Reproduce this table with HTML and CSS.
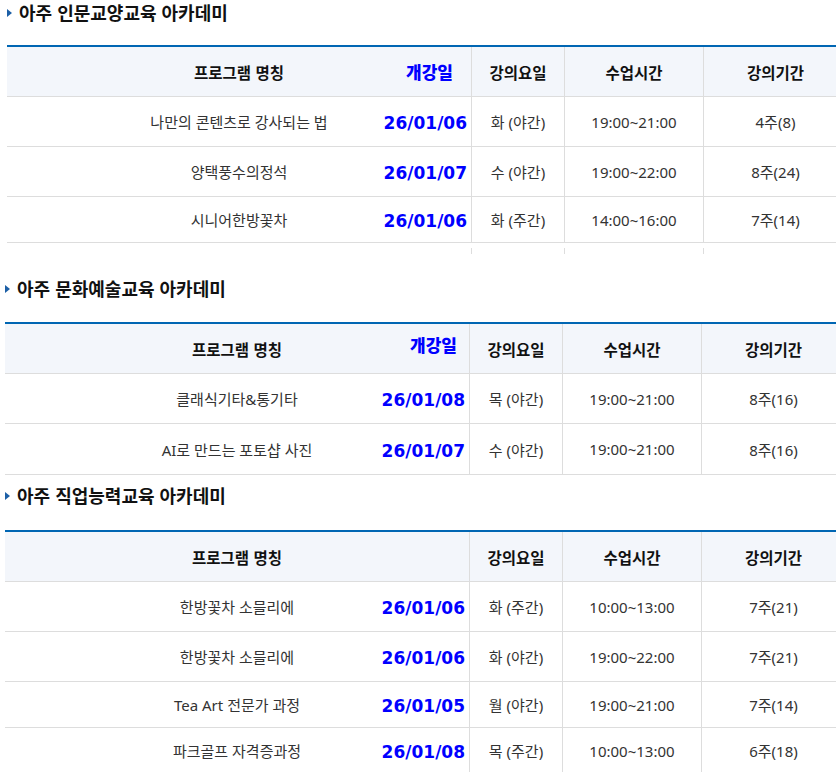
FILE: index.html
```html
<!DOCTYPE html>
<html lang="ko">
<head>
<meta charset="utf-8">
<title>아주 아카데미 강좌 일정</title>
<link rel="stylesheet" href="styles.css">
</head>
<body>
<section class="academy academy--first">
  <h2 class="academy__title"><span class="academy__bullet"></span>아주 인문교양교육 아카데미</h2>
  <div class="schedule">
    <div class="row row--head">
      <div class="cell cell--name">프로그램 명칭</div>
      <div class="cell cell--date cell--date-head">개강일</div>
      <div class="cell cell--day">강의요일</div>
      <div class="cell cell--time">수업시간</div>
      <div class="cell cell--period">강의기간</div>
    </div>
    <div class="row">
      <div class="cell cell--name">나만의 콘텐츠로 강사되는 법</div>
      <div class="cell cell--date">26/01/06</div>
      <div class="cell cell--day">화 (야간)</div>
      <div class="cell cell--time">19:00~21:00</div>
      <div class="cell cell--period">4주(8)</div>
    </div>
    <div class="row">
      <div class="cell cell--name">양택풍수의정석</div>
      <div class="cell cell--date">26/01/07</div>
      <div class="cell cell--day">수 (야간)</div>
      <div class="cell cell--time">19:00~22:00</div>
      <div class="cell cell--period">8주(24)</div>
    </div>
    <div class="row row--short">
      <div class="cell cell--name">시니어한방꽃차</div>
      <div class="cell cell--date">26/01/06</div>
      <div class="cell cell--day">화 (주간)</div>
      <div class="cell cell--time">14:00~16:00</div>
      <div class="cell cell--period">7주(14)</div>
    </div>
  </div>
  <div class="schedule-tail">
    <div class="schedule-tail__gap"></div>
    <div class="schedule-tail__stub"></div>
    <div class="schedule-tail__stub"></div>
    <div class="schedule-tail__stub"></div>
  </div>
</section>

<section class="academy academy--second">
  <h2 class="academy__title"><span class="academy__bullet"></span>아주 문화예술교육 아카데미</h2>
  <div class="schedule">
    <div class="row row--head">
      <div class="cell cell--name">프로그램 명칭</div>
      <div class="cell cell--date cell--date-head cell--date-raised">개강일</div>
      <div class="cell cell--day">강의요일</div>
      <div class="cell cell--time">수업시간</div>
      <div class="cell cell--period">강의기간</div>
    </div>
    <div class="row">
      <div class="cell cell--name">클래식기타&amp;통기타</div>
      <div class="cell cell--date">26/01/08</div>
      <div class="cell cell--day">목 (야간)</div>
      <div class="cell cell--time">19:00~21:00</div>
      <div class="cell cell--period">8주(16)</div>
    </div>
    <div class="row row--tall">
      <div class="cell cell--name">AI로 만드는 포토샵 사진</div>
      <div class="cell cell--date">26/01/07</div>
      <div class="cell cell--day">수 (야간)</div>
      <div class="cell cell--time">19:00~21:00</div>
      <div class="cell cell--period">8주(16)</div>
    </div>
  </div>
</section>

<section class="academy academy--third">
  <h2 class="academy__title"><span class="academy__bullet"></span>아주 직업능력교육 아카데미</h2>
  <div class="schedule">
    <div class="row row--head">
      <div class="cell cell--name">프로그램 명칭</div>
      <div class="cell cell--day">강의요일</div>
      <div class="cell cell--time">수업시간</div>
      <div class="cell cell--period">강의기간</div>
    </div>
    <div class="row">
      <div class="cell cell--name">한방꽃차 소믈리에</div>
      <div class="cell cell--date">26/01/06</div>
      <div class="cell cell--day">화 (주간)</div>
      <div class="cell cell--time">10:00~13:00</div>
      <div class="cell cell--period">7주(21)</div>
    </div>
    <div class="row">
      <div class="cell cell--name">한방꽃차 소믈리에</div>
      <div class="cell cell--date">26/01/06</div>
      <div class="cell cell--day">화 (야간)</div>
      <div class="cell cell--time">19:00~22:00</div>
      <div class="cell cell--period">7주(21)</div>
    </div>
    <div class="row row--short">
      <div class="cell cell--name">Tea Art 전문가 과정</div>
      <div class="cell cell--date">26/01/05</div>
      <div class="cell cell--day">월 (야간)</div>
      <div class="cell cell--time">19:00~21:00</div>
      <div class="cell cell--period">7주(14)</div>
    </div>
    <div class="row row--short">
      <div class="cell cell--name">파크골프 자격증과정</div>
      <div class="cell cell--date">26/01/08</div>
      <div class="cell cell--day">목 (주간)</div>
      <div class="cell cell--time">10:00~13:00</div>
      <div class="cell cell--period">6주(18)</div>
    </div>
  </div>
</section>
</body>
</html>
```
FILE: styles.css
```css
html, body {
  margin: 0;
  padding: 0;
  overflow-x: hidden;
  background: #fff;
}

body {
  font-family: "Noto Sans", "Noto Sans CJK KR", sans-serif;
  color: #333;
}

.academy {
  padding-left: 5px;
}

.academy--first {
  padding-left: 7px;
}

.academy--second {
  margin-top: 22px;
}

.academy--third {
  margin-top: 8px;
}

.academy__title {
  display: flex;
  align-items: center;
  gap: 7px;
  margin: 0 0 21px;
  height: 24px;
  font-family: "Noto Sans CJK KR", sans-serif;
  font-size: 18px;
  font-weight: 700;
  color: #111;
  letter-spacing: 0;
}

.academy--second .academy__title {
  margin-bottom: 22px;
}

.academy--third .academy__title {
  margin-bottom: 23px;
}

.academy__bullet {
  width: 0;
  height: 0;
  border-left: 5px solid #1c5fa6;
  border-top: 4px solid transparent;
  border-bottom: 4px solid transparent;
  margin-top: 2px;
}

.schedule {
  width: 840px;
  border-top: 2px solid #0066b3;
}

.row {
  display: grid;
  grid-template-columns: 464px 93px 139px 144px;
  grid-template-rows: 49px;
  border-bottom: 1px solid #dddddd;
  font-size: 15px;
}

.row--head {
  background: #f3f6fb;
  font-family: "Noto Sans CJK KR", sans-serif;
  font-size: 15.5px;
  font-weight: 700;
  color: #111;
}

.row--short {
  grid-template-rows: 45px;
}

.row--tall {
  grid-template-rows: 50px;
}

.cell {
  display: flex;
  align-items: center;
  justify-content: center;
  white-space: nowrap;
}

.cell--name {
  grid-column: 1;
  grid-row: 1;
}

.cell--date {
  grid-column: 1;
  grid-row: 1;
  justify-self: end;
  padding-right: 4px;
  padding-top: 3px;
  font-family: "DejaVu Sans", Verdana, sans-serif;
  font-weight: 700;
  font-size: 17px;
  color: #0000ff;
}

.cell--date-head {
  font-family: "Noto Sans CJK KR", sans-serif;
  font-size: 17px;
  font-weight: 900;
  padding-right: 18px;
  padding-top: 0;
}

.cell--date-raised {
  padding-bottom: 8px;
  padding-right: 12px;
}

.cell--day,
.cell--time,
.cell--period {
  border-left: 1px solid #dddddd;
}

.cell--day { grid-column: 2; }
.cell--time { grid-column: 3; }
.cell--period { grid-column: 4; }

.schedule-tail {
  display: grid;
  grid-template-columns: 464px 93px 139px 144px;
  height: 6px;
  margin-top: 5px;
}

.schedule-tail__stub {
  border-left: 1px solid #dddddd;
}
```
